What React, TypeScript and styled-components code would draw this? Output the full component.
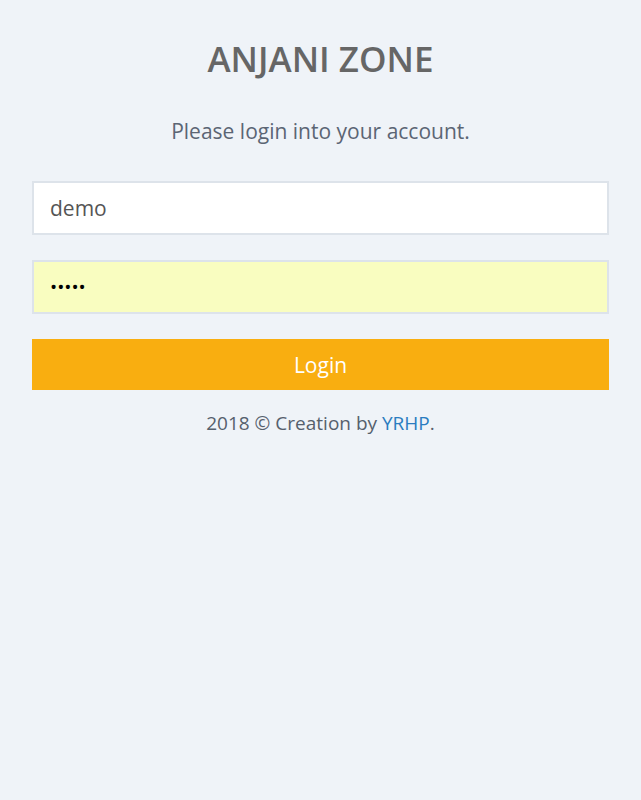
import React from "react";
import styled, { createGlobalStyle } from "styled-components";

const Global = createGlobalStyle`
  html, body { margin: 0; padding: 0; background: #eff3f8; }
  body { font-family: "Open Sans", "Noto Sans", sans-serif; }
  * { box-sizing: border-box; }
`;

const Page = styled.div`
  min-height: 800px;
  padding: 0 32px;
  display: flex;
  flex-direction: column;
  align-items: stretch;
`;

const Title = styled.h1`
  margin: 37px 0 0;
  text-align: center;
  font-size: 35px;
  font-weight: 600;
  color: #666666;
  line-height: 44px;
`;

const Subtitle = styled.p`
  margin: 36px 0 0;
  text-align: center;
  font-size: 21px;
  color: #5b6574;
  line-height: 28px;
`;

const Form = styled.form`
  margin-top: 36px;
  display: flex;
  flex-direction: column;
  gap: 25px;
`;

const Input = styled.input<{ $autofill?: boolean }>`
  height: 54px;
  width: 100%;
  border: 2px solid #dde3ea;
  background: ${(p) => (p.$autofill ? "#f9fdc0" : "#ffffff")};
  padding: 0 16px;
  font-family: "Open Sans", sans-serif;
  font-size: ${(p) => (p.$autofill ? "19px" : "21px")};
  color: ${(p) => (p.$autofill ? "#000" : "#555555")};
  outline: none;
`;

const Button = styled.button`
  height: 51px;
  border: none;
  background: #f9ae10;
  color: #ffffff;
  font-family: "Open Sans", sans-serif;
  font-size: 21px;
  cursor: pointer;
`;

const Footer = styled.p`
  margin: 20px 0 0;
  text-align: center;
  font-size: 19px;
  color: #56606d;
  line-height: 26px;
`;

const Link = styled.a`
  color: #2a7cc0;
  text-decoration: none;
`;

export default function App() {
  return (
    <>
      <Global />
      <Page>
        <Title>ANJANI ZONE</Title>
        <Subtitle>Please login into your account.</Subtitle>
        <Form onSubmit={(e) => e.preventDefault()}>
          <Input type="text" defaultValue="demo" />
          <Input type="password" defaultValue="demo1" $autofill />
          <Button type="submit">Login</Button>
        </Form>
        <Footer>
          2018 © Creation by <Link href="#">YRHP</Link>.
        </Footer>
      </Page>
    </>
  );
}
